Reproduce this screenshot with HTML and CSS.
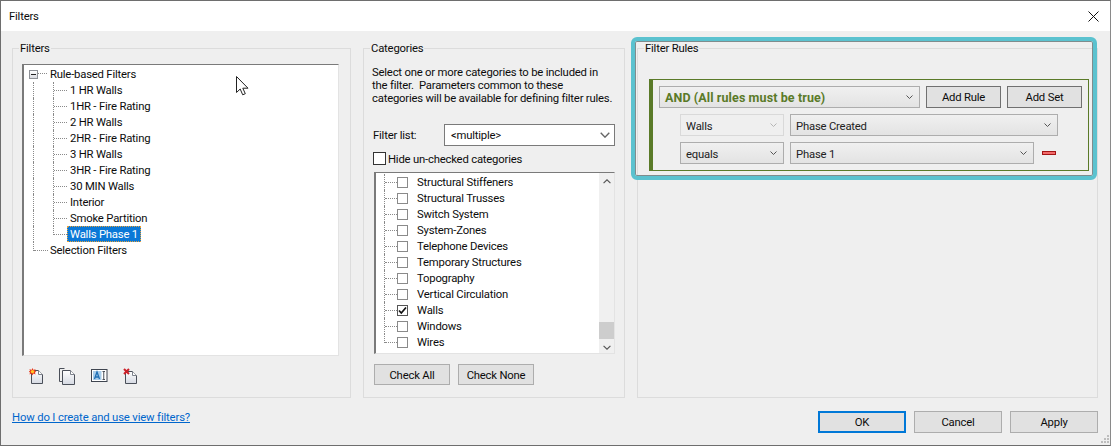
FILE: index.html
```html
<!DOCTYPE html>
<html lang="en">
<head>
<meta charset="utf-8">
<title>Filters</title>
<link rel="stylesheet" href="styles.css">
</head>
<body>
<svg width="0" height="0" class="defs">
  <defs>
    <linearGradient id="pg" x1="0" y1="0" x2="0" y2="1"><stop offset="0" stop-color="#fff"/><stop offset="1" stop-color="#d5d9e2"/></linearGradient>
    <symbol id="chev" viewBox="0 0 7 4"><path d="M.5.5 3.5 3.5 6.5.5" fill="none" stroke="currentColor" stroke-width="1"/></symbol>
  </defs>
</svg>
<div class="dialog">
  <header class="titlebar">
    <span class="title">Filters</span>
    <svg class="close" width="11" height="11" viewBox="0 0 11 11"><path d="M.5.5 10.5 10.5M10.5.5.5 10.5" stroke="#111" fill="none"/></svg>
  </header>
  <main class="groups">
    <fieldset class="group">
      <legend>Filters</legend>
      <div class="tree">
        <div class="node root"><span class="exp"></span><span class="stub"></span><span class="label">Rule-based Filters</span></div>
        <div class="branch">
          <div class="node"><span class="vline"></span><span class="elbow"></span><span class="label">1 HR Walls</span></div>
          <div class="node"><span class="vline"></span><span class="elbow"></span><span class="label">1HR - Fire Rating</span></div>
          <div class="node"><span class="vline"></span><span class="elbow"></span><span class="label">2 HR Walls</span></div>
          <div class="node"><span class="vline"></span><span class="elbow"></span><span class="label">2HR - Fire Rating</span></div>
          <div class="node"><span class="vline"></span><span class="elbow"></span><span class="label">3 HR Walls</span></div>
          <div class="node"><span class="vline"></span><span class="elbow"></span><span class="label">3HR - Fire Rating</span></div>
          <div class="node"><span class="vline"></span><span class="elbow"></span><span class="label">30 MIN Walls</span></div>
          <div class="node"><span class="vline"></span><span class="elbow"></span><span class="label">Interior</span></div>
          <div class="node"><span class="vline"></span><span class="elbow"></span><span class="label">Smoke Partition</span></div>
          <div class="node"><span class="vline"></span><span class="elbow last"></span><span class="label selected">Walls Phase 1</span></div>
        </div>
        <div class="node top"><span class="elbow last wide"></span><span class="label">Selection Filters</span></div>
      </div>
      <div class="tools">
        <svg width="16" height="17" viewBox="0 0 16 17"><path d="M2.500 2.500H9.500L13.500 6.500V15.500H2.500Z" fill="url(#pg)" stroke="#4a4f59"/><path d="M9.500 2.500V6.500H13.500" fill="#fff" stroke="#7d828c"/><path d="M3.500 0 4.500 2 6.500 1 6 3 7.500 3.500 6 4.500 6.500 6.500 4.500 5.500 3.500 7.500 2.500 5.500.5 6.500 1 4.500-.5 3.500 1 3 .5 1 2.500 2Z" fill="#e8391a"/><circle cx="3.500" cy="3.600" r="1.700" fill="#ffc926"/></svg>
        <svg width="17" height="17" viewBox="0 0 17 17"><path d="M5.500.5H.5V13.500H3.500" fill="none" stroke="#4a4f59"/><path d="M3.500 2.500H11.500L15.500 6.500V16.500H3.500Z" fill="url(#pg)" stroke="#4a4f59"/><path d="M11.500 2.500V6.500H15.500" fill="#fff" stroke="#7d828c"/></svg>
        <svg class="rename" width="17" height="13" viewBox="0 0 17 13"><rect x=".5" y=".5" width="15.500" height="12" fill="#fff" stroke="#3f4550"/><rect x="2" y="2" width="8.500" height="9" fill="#a9cdea"/><path d="M3.500 10 6 3 8.500 10M4.500 8H7.500" fill="none" stroke="#1f6fb5" stroke-width="1.300"/><path d="M11.500 2.500H14M11.500 10.500H14M12.750 2.500V10.500" fill="none" stroke="#4a4f59"/></svg>
        <svg width="16" height="17" viewBox="0 0 16 17"><path d="M2.500 3.500H9.500L13.500 7.500V15.500H2.500Z" fill="url(#pg)" stroke="#4a4f59"/><path d="M9.500 3.500V7.500H13.500" fill="#fff" stroke="#7d828c"/><path d="M1 1 6 6M6 1 1 6" stroke="#cc2029" stroke-width="2"/></svg>
      </div>
    </fieldset>

    <fieldset class="group">
      <legend>Categories</legend>
      <p class="intro">Select one or more categories to be included in<br>the filter.&nbsp; Parameters common to these<br>categories will be available for defining filter rules.</p>
      <div class="filter-row">
        <span>Filter list:</span>
        <div class="combo"><span>&lt;multiple&gt;</span><svg width="10" height="6"><use href="#chev"/></svg></div>
      </div>
      <label class="hide-row"><span class="box big"></span><span class="hide-text">Hide un-checked categories</span></label>
      <div class="cats">
        <div class="cat-items">
          <div class="cat"><span class="elbow"></span><span class="box"></span><span class="cat-name">Structural Stiffeners</span></div>
          <div class="cat"><span class="elbow"></span><span class="box"></span><span class="cat-name">Structural Trusses</span></div>
          <div class="cat"><span class="elbow"></span><span class="box"></span><span class="cat-name">Switch System</span></div>
          <div class="cat"><span class="elbow"></span><span class="box"></span><span class="cat-name">System-Zones</span></div>
          <div class="cat"><span class="elbow"></span><span class="box"></span><span class="cat-name">Telephone Devices</span></div>
          <div class="cat"><span class="elbow"></span><span class="box"></span><span class="cat-name">Temporary Structures</span></div>
          <div class="cat"><span class="elbow"></span><span class="box"></span><span class="cat-name">Topography</span></div>
          <div class="cat"><span class="elbow"></span><span class="box"></span><span class="cat-name">Vertical Circulation</span></div>
          <div class="cat"><span class="elbow"></span><span class="box checked"><svg width="9" height="9" viewBox="0 0 9 9"><path d="M1 4.500 3.300 7 8 1.500" fill="none" stroke="#111" stroke-width="1.700"/></svg></span><span class="cat-name">Walls</span></div>
          <div class="cat"><span class="elbow"></span><span class="box"></span><span class="cat-name">Windows</span></div>
          <div class="cat"><span class="elbow last"></span><span class="box"></span><span class="cat-name">Wires</span></div>
        </div>
        <div class="scrollbar">
          <svg class="arrow" width="8" height="5"><use href="#chev" transform="matrix(1 0 0 -1 0 5)"/></svg>
          <span class="track"></span>
          <span class="thumb"></span>
          <svg class="arrow" width="8" height="5"><use href="#chev"/></svg>
        </div>
      </div>
      <div class="check-buttons">
        <button class="btn">Check All</button>
        <button class="btn">Check None</button>
      </div>
    </fieldset>

    <fieldset class="group">
      <legend>Filter Rules</legend>
      <div class="rule-set">
        <div class="rule-row">
          <div class="sel and"><span>AND (All rules must be true)</span><svg width="7" height="4"><use href="#chev"/></svg></div>
          <button class="btn dark">Add Rule</button>
          <button class="btn dark">Add Set</button>
        </div>
        <div class="rule-row indent">
          <div class="sel param disabled"><span>Walls</span><svg width="7" height="4"><use href="#chev"/></svg></div>
          <div class="sel value-long"><span>Phase Created</span><svg width="7" height="4"><use href="#chev"/></svg></div>
        </div>
        <div class="rule-row indent">
          <div class="sel param"><span>equals</span><svg width="7" height="4"><use href="#chev"/></svg></div>
          <div class="sel value-short"><span>Phase 1</span><svg width="7" height="4"><use href="#chev"/></svg></div>
          <span class="minus"></span>
        </div>
      </div>
    </fieldset>
  </main>
  <footer class="footer">
    <a class="help" href="#">How do I create and use view filters?</a>
    <div class="actions">
      <button class="btn wide default">OK</button>
      <button class="btn wide">Cancel</button>
      <button class="btn wide">Apply</button>
    </div>
  </footer>
  <div class="highlight"></div>
  <svg class="cursor" width="13" height="20" viewBox="0 0 13 20"><path d="M.5.500V16.500L4.200 13 6.700 18.800 9.300 17.700 6.800 12.200H12Z" fill="#fff" stroke="#222"/></svg>
  <svg class="grip" width="10" height="10" viewBox="0 0 10 10"><path d="M7 0h2v2H7zM4 3h2v2H4zM7 3h2v2H7zM1 6h2v2H1zM4 6h2v2H4zM7 6h2v2H7z" fill="#bdbdbd"/></svg>
</div>
</body>
</html>
```
FILE: styles.css
```css
* { box-sizing: border-box; }
html, body { margin: 0; padding: 0; }
body {
  width: 1111px;
  height: 446px;
  overflow: hidden;
  font-family: Roboto, "Noto Sans", sans-serif;
  font-size: 11.3px;
  letter-spacing: -0.2px;
  color: #0c0c0c;
}
.defs { position: absolute; }
.dialog {
  position: relative;
  width: 1111px;
  height: 446px;
  background: #efefef;
  border: 1px solid #6e6e6e;
  border-right-color: #8a8a8a;
  display: flex;
  flex-direction: column;
}
.titlebar {
  height: 30px;
  flex: none;
  background: #fff;
  display: flex;
  align-items: center;
  justify-content: space-between;
  padding: 0 11px 0 8px;
}
.close { display: block; }
.groups {
  flex: none;
  display: flex;
  gap: 12px;
  padding: 9px 0 0 11px;
}
.group {
  margin: 0;
  padding: 0;
  border: 1px solid #dcdcdc;
  height: 358px;
  min-width: 0;
  display: block;
}
.group:nth-child(1) { width: 339px; }
.group:nth-child(2) { width: 262px; }
.group:nth-child(3) { width: 461px; }
legend {
  margin-left: 6px;
  padding: 1px 1px 0;
  line-height: 16px;
  height: 16px;
}
.tree {
  margin: 8px 0 0 9px;
  width: 317px;
  height: 292px;
  background: #fff;
  border: 1px solid #e3e3e3;
  border-top: 1px solid #7a7a7a;
  border-left: 2px solid #7a7a7a;
  padding-top: 1px;
}
.node {
  display: flex;
  height: 16px;
  align-items: flex-start;
}
.label { line-height: 16px; padding: 1px 2px 0; height: 16px; white-space: nowrap; }
.branch .label { padding: 1px 3px 0; }
.root { padding-left: 5px; }
.exp {
  width: 9px;
  height: 9px;
  margin-top: 4px;
  border: 1px solid #8d9096;
  background: linear-gradient(#fff, #d8dae0) ;
  position: relative;
  flex: none;
}
.exp::after {
  content: "";
  position: absolute;
  left: 1px;
  right: 1px;
  top: 3px;
  height: 1px;
  background: #222;
}
.stub {
  width: 9px;
  height: 8px;
  border-bottom: 1px dotted #8a8a8a;
  margin-right: 1px;
  flex: none;
}
.branch { padding-left: 9px; }
.vline {
  width: 20px;
  height: 16px;
  border-left: 1px dotted #8a8a8a;
  flex: none;
}
.elbow {
  width: 14px;
  height: 16px;
  border-left: 1px dotted #8a8a8a;
  position: relative;
  flex: none;
}
.elbow::after {
  content: "";
  position: absolute;
  left: 0;
  right: 0;
  top: 8px;
  border-top: 1px dotted #8a8a8a;
}
.elbow.last { height: 9px; }
.top { padding-left: 9px; }
.elbow.wide { width: 15px; }
.selected {
  background: #0a78d7;
  color: #fff;
  outline: 1px dotted #e8a23a;
  outline-offset: -1px;
}
.tools {
  display: flex;
  align-items: flex-start;
  margin: 12px 0 0 16px;
}
.tools svg:nth-child(1) { margin-right: 14px; }
.tools svg:nth-child(2) { margin-right: 15px; }
.tools svg:nth-child(3) { margin-right: 15px; }
.tools .rename { margin-top: 1px; }
.intro {
  margin: 0 0 0 8px;
  padding-top: 10px;
  width: 250px;
  line-height: 13px;
  height: 65px;
  white-space: nowrap;
}
.filter-row {
  display: flex;
  align-items: center;
  justify-content: space-between;
  height: 22px;
  margin: 3px 9px 0 9px;
}
.combo {
  width: 171px;
  height: 22px;
  background: #fff;
  border: 1px solid #7a7a7a;
  display: flex;
  align-items: center;
  justify-content: space-between;
  padding: 0 4px 0 6px;
}
.combo svg { color: #666; }
.hide-row {
  display: flex;
  align-items: center;
  gap: 2px;
  height: 15px;
  margin: 5px 0 0 9px;
}
.hide-text { padding-top: 2px; }
.box {
  width: 11px;
  height: 11px;
  flex: none;
  background: #fff;
  border: 1px solid #8a8a8a;
  display: flex;
  align-items: center;
  justify-content: center;
}
.box.big { width: 13px; height: 13px; border-color: #333; }
.box.checked { border-color: #555; }
.cats {
  margin: 6px 0 0 10px;
  width: 241px;
  height: 182px;
  background: #fff;
  border: 1px solid #e3e3e3;
  border-top: 1px solid #7a7a7a;
  border-left: 2px solid #7a7a7a;
  display: flex;
  justify-content: space-between;
}
.cat-items { padding: 1px 0 0 8px; }
.cat {
  display: flex;
  align-items: center;
  height: 16px;
}
.cat-name { align-self: flex-start; line-height: 16px; height: 16px; padding-top: 1px; }
.cat .elbow { width: 13px; align-self: flex-start; }
.cat .elbow.last { height: 9px; }
.cat .box { margin-right: 9px; }
.scrollbar {
  width: 15px;
  display: flex;
  flex-direction: column;
  align-items: center;
  padding-top: 6px;
  padding-bottom: 3px;
  background: #f0f0f0;
  color: #555;
}
.track { flex: 1; }
.thumb { width: 15px; height: 17px; background: #cdcdcd; margin-bottom: 6px; }
.arrow { flex: none; }
.check-buttons {
  display: flex;
  gap: 8px;
  margin: 10px 0 0 10px;
}
.btn {
  font: inherit;
  letter-spacing: inherit;
  color: inherit;
  width: 76px;
  height: 21px;
  background: #e1e1e1;
  border: 1px solid #adadad;
  padding: 1px 0 0;
}
.btn.dark { width: 75px; height: 22px; border-color: #707070; padding: 0; }
.btn.wide { width: 88px; height: 22px; padding: 0; }
.btn.default { border: 2px solid #0078d7; }
.rule-set {
  margin: 23px 0 0 11px;
  width: 440px;
  height: 92px;
  border: 1px solid #5a7a28;
  border-left-width: 4px;
  padding: 6px 0 0 6px;
  display: flex;
  flex-direction: column;
  gap: 6px;
}
.rule-row { display: flex; gap: 6px; align-items: center; }
.rule-row.indent { margin-left: 21px; }
.sel {
  height: 22px;
  display: flex;
  align-items: center;
  justify-content: space-between;
  padding: 0 6px 0 5px;
  border: 1px solid #adadad;
  background: linear-gradient(#f0f0f0, #e3e3e3);
  color: #222;
  flex: none;
}
.sel span { padding-top: 2px; }
.sel svg { color: #555; }
.and {
  width: 261px;
  font-weight: 700;
  font-size: 12.5px;
  letter-spacing: 0.1px;
  color: #5a7a28;
}
.and span { padding-top: 0; }
.param { width: 104px; }
.value-long { width: 268px; }
.value-short { width: 244px; }
.disabled { border-color: #d9d9d9; background: #efefef; }
.disabled svg { color: #b5b5b5; }
.minus {
  width: 14px;
  height: 4px;
  margin-left: 2px;
  background: #f26a6a;
  border: 1px solid #a31515;
}
.footer {
  display: flex;
  justify-content: space-between;
  align-items: flex-start;
  padding: 13px 12px 0 11px;
}
.help { color: #0066cc; text-decoration: underline; letter-spacing: -0.15px; }
.actions { display: flex; gap: 8px; }
.highlight {
  position: absolute;
  left: 630px;
  top: 36px;
  width: 466px;
  height: 143px;
  border: 4px solid #5bc2cf;
  border-radius: 6px;
  box-shadow: inset 0 0 0 1px #7f8c8d;
  pointer-events: none;
}
.cursor { position: absolute; left: 235px; top: 75px; }
.grip { position: absolute; right: 0; bottom: 0; }
```
